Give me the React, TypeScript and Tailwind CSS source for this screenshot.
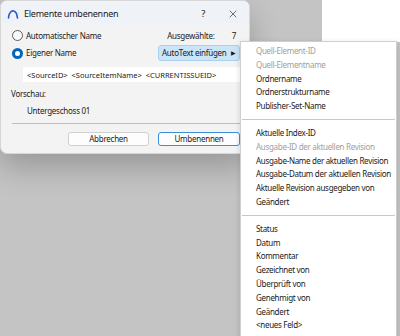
import { X } from 'lucide-react'

const groups: { label: string; disabled?: boolean }[][] = [
  [
    { label: 'Quell-Element-ID', disabled: true },
    { label: 'Quell-Elementname', disabled: true },
    { label: 'Ordnername' },
    { label: 'Ordnerstrukturname' },
    { label: 'Publisher-Set-Name' },
  ],
  [
    { label: 'Aktuelle Index-ID' },
    { label: 'Ausgabe-ID der aktuellen Revision', disabled: true },
    { label: 'Ausgabe-Name der aktuellen Revision' },
    { label: 'Ausgabe-Datum der aktuellen Revision' },
    { label: 'Aktuelle Revision ausgegeben von' },
    { label: 'Geändert' },
  ],
  [
    { label: 'Status' },
    { label: 'Datum' },
    { label: 'Kommentar' },
    { label: 'Gezeichnet von' },
    { label: 'Überprüft von' },
    { label: 'Genehmigt von' },
    { label: 'Geändert' },
    { label: '<neues Feld>' },
  ],
]

function Radio({ checked }: { checked?: boolean }) {
  if (checked) {
    return (
      <span className="w-[11px] h-[11px] rounded-full bg-[#0067c0] flex items-center justify-center">
        <span className="w-[5px] h-[5px] rounded-full bg-white" />
      </span>
    )
  }
  return <span className="w-[11px] h-[11px] rounded-full border border-[#5c5c5c] bg-[#f9f9f9]" />
}

function AutoTextMenu() {
  return (
    <div className="absolute left-[240px] top-[41px] w-[157px] h-[300px] bg-white border border-[#cfcfcf] shadow-[0_2px_6px_rgba(0,0,0,0.15)] pt-[2px] text-[8px] tracking-[-0.3px]">
      {groups.map((items, gi) => (
        <div key={gi}>
          {gi > 0 && <div className="h-px bg-[#c8c8c8] mx-[1px] my-[6px]" />}
          {items.map((item, i) => (
            <div
              key={i}
              className={`h-[13.8px] leading-[13.8px] pl-[15px] whitespace-nowrap ${item.disabled ? 'text-[#a0a0a0]' : 'text-[#1a1a1a]'}`}
            >
              {item.label}
            </div>
          ))}
        </div>
      ))}
    </div>
  )
}

export default function App() {
  return (
    <div
      className="relative w-[400px] h-[336px] overflow-hidden bg-[#c4c4c4] text-[8px] leading-[12px] tracking-[-0.25px] text-[#1a1a1a]"
      style={{ fontFamily: '"Segoe UI", "Noto Sans", sans-serif' }}
    >
      <div className="absolute left-[322px] top-0 w-[78px] h-[42px] bg-white" />
      <div className="absolute left-[242px] top-[147px] w-[10px] h-px bg-[#8a8a8a]" />

      <div className="w-[250px] h-[154px] rounded-[7px] bg-[#f3f3f3] border border-[#d6d6d6] shadow-[0_14px_30px_rgba(0,0,0,0.22)] flex flex-col overflow-hidden">
        <div className="h-[25px] shrink-0 bg-[#eff3f8] flex items-center pl-[6px] pr-[10px]">
          <svg width="12" height="10" viewBox="0 0 12 10" className="mr-[5px]">
            <path d="M1.5 9 C2 3, 6 -1, 9.5 4.5 L10.5 9" fill="none" stroke="#2a5bc9" strokeWidth="1.6" strokeLinecap="round" />
          </svg>
          <span className="text-[9px] text-[#1a1a1a]">Elemente umbenennen</span>
          <span className="ml-auto text-[9.5px] mr-[22px]">?</span>
          <X size={12} strokeWidth={1.3} className="text-[#222]" />
        </div>

        <div className="flex flex-col px-[11px] pt-[1px]">
          <div className="flex items-center h-[17px]">
            <Radio />
            <span className="ml-[3px]">Automatischer Name</span>
            <span className="ml-auto">Ausgewählte:</span>
            <span className="ml-[17px] mr-[2px]">7</span>
          </div>
          <div className="flex items-center h-[18px]">
            <Radio checked />
            <span className="ml-[3px]">Eigener Name</span>
            <div className="ml-auto mr-[-2px] w-[82px] h-[16px] rounded-[3px] bg-[#cce4f7] border border-[#a9d2f2] flex items-center pl-[3px] pr-[3px] whitespace-nowrap">
              <span>AutoText einfügen</span>
              <span className="ml-auto text-[6px]">▶</span>
            </div>
          </div>
          <div className="mt-[5px] ml-[11px] mr-[-8px] h-[15px] bg-white flex items-center pl-[4px] text-[7.5px] tracking-normal whitespace-nowrap">
            &lt;SourceID&gt;&nbsp; &lt;SourceItemName&gt;&nbsp; &lt;CURRENTISSUEID&gt;
          </div>
          <div className="mt-[6px] ml-[-1px]">Vorschau:</div>
          <div className="mt-[5px] ml-[15px]">Untergeschoss 01</div>
          <div className="mt-[6px] h-px bg-[#bdbdbd] mr-[-2px]" />
          <div className="mt-[8px] flex justify-end gap-[9px] mr-[-2px]">
            <div className="w-[81px] h-[14px] rounded-[3px] bg-[#fdfdfd] border border-[#d0d0d0] flex items-center justify-center">
              Abbrechen
            </div>
            <div className="w-[82px] h-[14px] rounded-[3px] bg-[#fdfdfd] border border-[#3a8ee0] flex items-center justify-center">
              Umbenennen
            </div>
          </div>
        </div>
      </div>

      <AutoTextMenu />
    </div>
  )
}
